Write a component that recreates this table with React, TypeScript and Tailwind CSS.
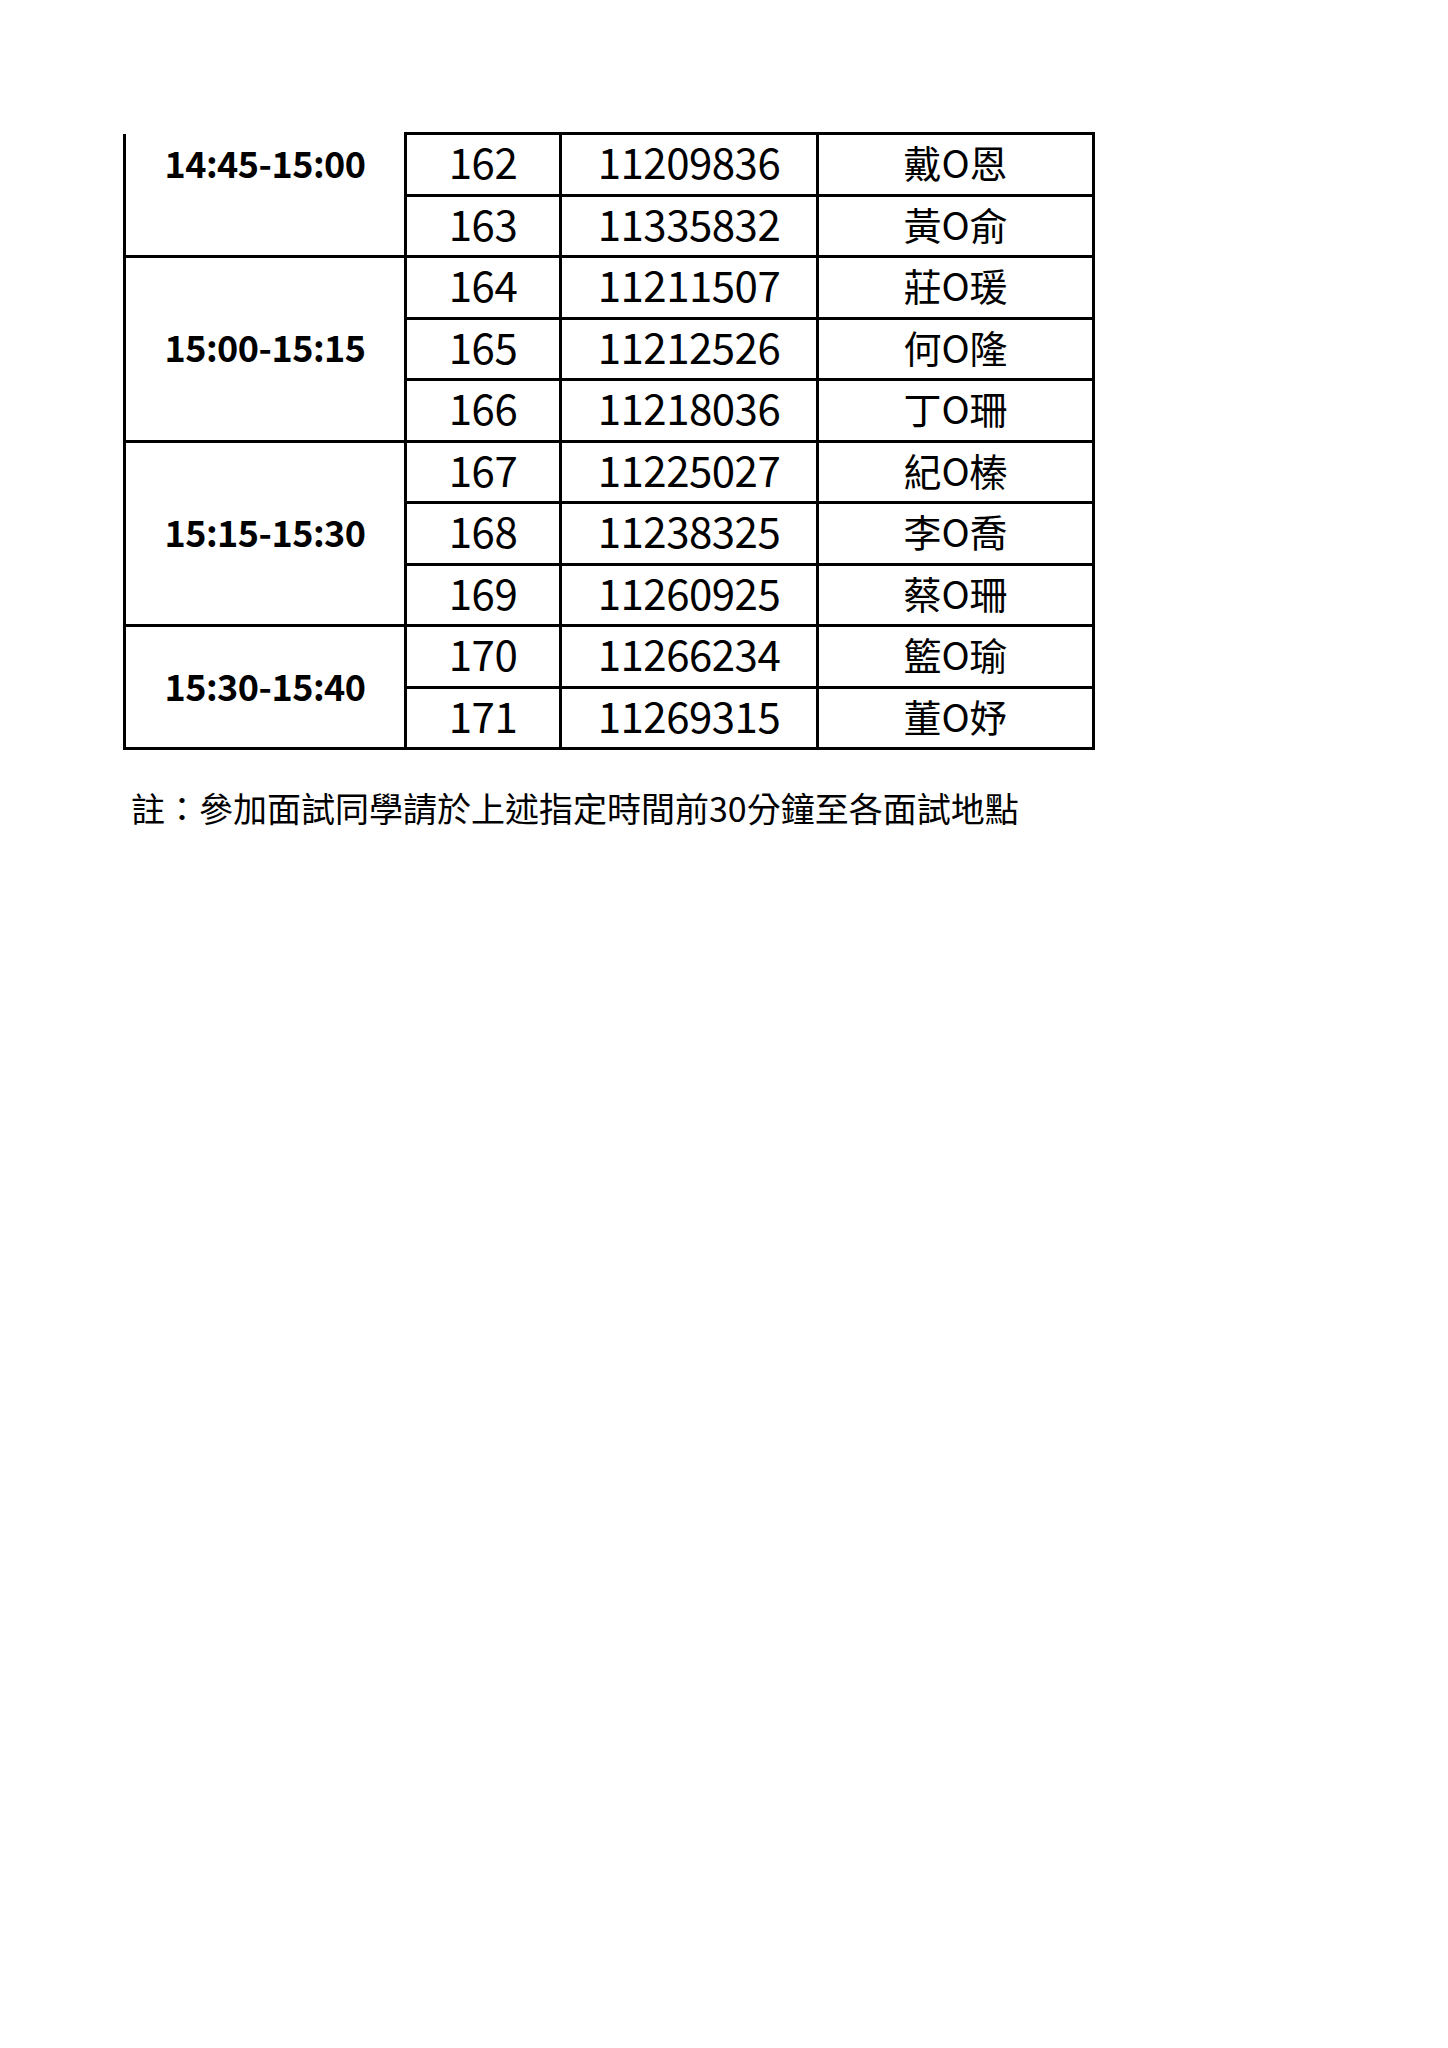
type Row = [string, string, string];

type Group = {
  time: string;
  rows: Row[];
};

const groups: Group[] = [
  {
    time: "14:45-15:00",
    rows: [
      ["162", "11209836", "戴O恩"],
      ["163", "11335832", "黃O俞"],
    ],
  },
  {
    time: "15:00-15:15",
    rows: [
      ["164", "11211507", "莊O瑗"],
      ["165", "11212526", "何O隆"],
      ["166", "11218036", "丁O珊"],
    ],
  },
  {
    time: "15:15-15:30",
    rows: [
      ["167", "11225027", "紀O榛"],
      ["168", "11238325", "李O喬"],
      ["169", "11260925", "蔡O珊"],
    ],
  },
  {
    time: "15:30-15:40",
    rows: [
      ["170", "11266234", "籃O瑜"],
      ["171", "11269315", "董O妤"],
    ],
  },
];

const font = { fontFamily: '"Noto Sans CJK TC", "Noto Sans", sans-serif' };

export default function App() {
  return (
    <div className="min-h-[2048px] w-[1448px] bg-white text-black" style={font}>
      <div className="pt-[132px] pl-[123px]">
        <table className="border-collapse">
          <colgroup>
            <col className="w-[281px]" />
            <col className="w-[155px]" />
            <col className="w-[257px]" />
            <col className="w-[276px]" />
          </colgroup>
          <tbody>
            {groups.map((g, gi) =>
              g.rows.map((r, ri) => (
                <tr key={r[0]} className="h-[61.5px]">
                  {ri === 0 && (
                    <td
                      rowSpan={g.rows.length}
                      className={
                        gi === 0
                          ? "border-[3px] border-t-0 border-black p-0 pt-[10px] text-center align-top text-[36px] font-semibold tracking-[-0.5px] leading-none"
                          : "border-[3px] border-black p-0 pb-[5px] text-center align-middle text-[36px] font-semibold tracking-[-0.5px] leading-none"
                      }
                    >
                      {g.time}
                    </td>
                  )}
                  <td className="border-[3px] border-black p-0 pb-[6px] text-center align-middle text-[42px] tracking-[-0.5px] leading-none">
                    {r[0]}
                  </td>
                  <td className="border-[3px] border-black p-0 pb-[6px] text-center align-middle text-[42px] tracking-[-0.5px] leading-none">
                    {r[1]}
                  </td>
                  <td className="border-[3px] border-black p-0 pb-[4px] text-center align-middle text-[38px] leading-none">
                    {r[2]}
                  </td>
                </tr>
              ))
            )}
          </tbody>
        </table>
      </div>
      <p className="mt-[38px] pl-[131px] text-[34px] leading-[1.2]">
        註：參加面試同學請於上述指定時間前30分鐘至各面試地點
      </p>
    </div>
  );
}
